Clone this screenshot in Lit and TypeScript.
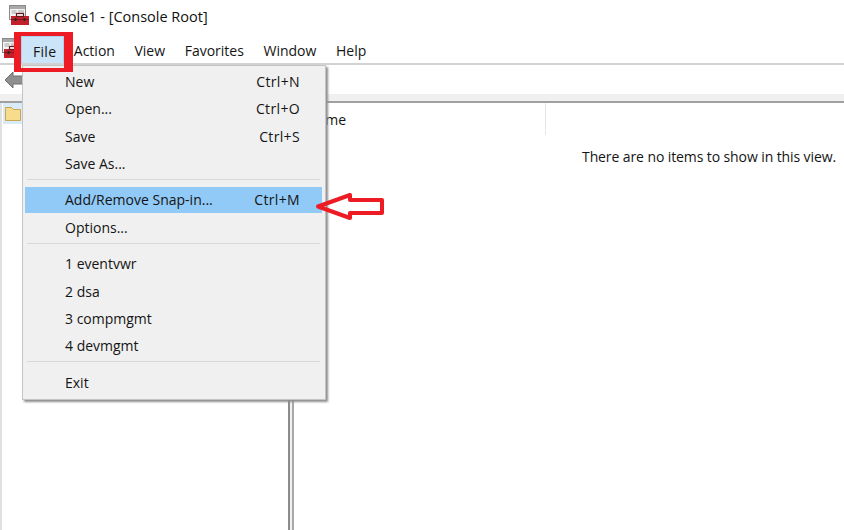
import { LitElement, html, css } from "lit";
import { customElement } from "lit/decorators.js";

const toolbox = (s: number) => html`<svg class="tb" width=${s} height=${s} viewBox="0 0 20 20">
  <rect x="0.5" y="0.5" width="16" height="14" fill="#f4f4f4" stroke="#8a8a8a"/>
  <rect x="1" y="1" width="15" height="3" fill="#a9a9a9"/>
  <path d="M2.5 6h5M2.5 8h5M9 6h6M9 8h6" stroke="#a5a5a5"/>
  <rect x="2" y="11" width="18" height="9" fill="#c3202b"/>
  <rect x="2" y="14" width="18" height="1" fill="#8c1219"/>
  <rect x="7.5" y="8.5" width="7" height="3" fill="none" stroke="#6b1a1e" stroke-width="1.2"/>
  <rect x="5.5" y="13" width="2" height="3" fill="#2a2a2a"/>
  <rect x="14.5" y="13" width="2" height="3" fill="#2a2a2a"/>
</svg>`;

type Row = { t: string; k?: string; on?: boolean } | "sep";
const rows: Row[] = [
  { t: "New", k: "Ctrl+N" },
  { t: "Open...", k: "Ctrl+O" },
  { t: "Save", k: "Ctrl+S" },
  { t: "Save As..." },
  "sep",
  { t: "Add/Remove Snap-in...", k: "Ctrl+M", on: true },
  { t: "Options..." },
  "sep",
  { t: "1 eventvwr" },
  { t: "2 dsa" },
  { t: "3 compmgmt" },
  { t: "4 devmgmt" },
  "sep",
  { t: "Exit" },
];

@customElement("app-root")
export class AppRoot extends LitElement {
  static styles = css`
    :host { display: block; width: 844px; height: 530px; position: relative; overflow: hidden; background: #fff;
      font-family: "Open Sans", "Noto Sans", sans-serif; font-size: 14px; color: #141414; }
    .title { height: 33px; display: flex; align-items: center; gap: 5px; padding: 0 0 3px 9px; box-sizing: border-box; font-size: 14.5px; color: #111; }
    .title span { margin-top: 2px; }
    .menubar { height: 32px; display: flex; align-items: center; box-sizing: border-box; padding: 0 0 0 2px; border-bottom: 2px solid #d2d2d2; }
    .menubar .tb { flex: none; }
    .mi { padding: 0 9.8px; height: 30px; display: flex; align-items: center; margin-top: 3px; }
    .mi span { margin-top: 2px; }
    .mi.file { width: 43px; height: 27px; margin: 3px 0 0 -1px; padding: 0 0 0 11px; box-sizing: border-box; background: #cce4f7; border: 1px solid #a9d3f5; border-bottom: none; letter-spacing: 0.3px; }
    .toolbar { height: 29px; background: #fff; display: flex; align-items: center; padding-left: 4px; box-sizing: border-box; }
    .strip { height: 7px; background: #f0f0f0; border-bottom: 2px solid #a0a0a0; }
    .panes { height: 427px; display: flex; }
    .tree { width: 288px; box-sizing: border-box; border-left: 2px solid #e0e0e0; padding: 0 0 0 1px; }
    .node { width: 20px; height: 21px; background: #d9ebf9; display: flex; align-items: center; justify-content: center; }
    .split { width: 6px; box-sizing: border-box; border-left: 2px solid #8c8c8c; border-right: 2px solid #a8a8a8; background: #f0f0f0; }
    .list { flex: 1; }
    .head { height: 32px; display: flex; align-items: center; width: 252px; box-sizing: border-box; padding-left: 13px; border-right: 1px solid #e6e6e6; }
    .empty { text-align: right; padding: 12px 8px 0 0; letter-spacing: -0.1px; }
    .menu { position: absolute; left: 22px; top: 65px; width: 304px; height: 335px; box-sizing: border-box;
      background: #f0f0f0; border: 1px solid #c4c4c4; box-shadow: 2px 2px 2px #8f8f8f; padding: 2px 3px 0 2px; }
    .row { height: 27.3px; display: flex; align-items: center; justify-content: space-between; padding: 0 22px 0 40px; box-sizing: border-box; }
    .row.on { background: #91c9f7; height: 26px; margin-bottom: 1px; }
    .key { letter-spacing: 0.35px; }
    .sep { height: 1px; background: #d8d8d8; margin: 2px 2px 6.4px 2px; }
    .redbox { position: absolute; left: 14px; top: 32px; box-sizing: content-box; width: 43px; height: 32px;
      border-style: solid; border-color: #ed1c24; border-width: 4px 9px 4px 7px; }
    .arrow { position: absolute; left: 310px; top: 187px; }
  `;
  render() {
    return html`
      <div class="title">${toolbox(20)}<span>Console1 - [Console Root]</span></div>
      <div class="menubar">
        ${toolbox(20)}
        <div class="mi file"><span>File</span></div>
        <div class="mi"><span>Action</span></div><div class="mi"><span>View</span></div><div class="mi"><span>Favorites</span></div><div class="mi"><span>Window</span></div><div class="mi"><span>Help</span></div>
      </div>
      <div class="toolbar">
        <svg width="20" height="18" viewBox="0 0 20 18"><path d="M1 9 9 1v4h10v8H9v4z" fill="#8f8f8f" stroke="#6e6e6e"/></svg>
      </div>
      <div class="strip"></div>
      <div class="panes">
        <div class="tree">
          <div class="node"><svg width="16" height="15" viewBox="0 0 16 15"><path d="M.5 1.5h6l2 2h7v11H.5z" fill="#f6dc8c" stroke="#c9a74e"/></svg></div>
        </div>
        <div class="split"></div>
        <div class="list">
          <div class="head">Name</div>
          <div class="empty">There are no items to show in this view.</div>
        </div>
      </div>
      <div class="menu">
        ${rows.map((r) =>
          r === "sep"
            ? html`<div class="sep"></div>`
            : html`<div class="row ${r.on ? "on" : ""}"><span>${r.t}</span><span class="key">${r.k ?? ""}</span></div>`
        )}
      </div>
      <div class="redbox"></div>
      <svg class="arrow" width="78" height="36" viewBox="0 0 78 36">
        <path d="M8 19.5 40 8v5h32v13H40v5z" fill="none" stroke="#ed1c24" stroke-width="4" stroke-linejoin="round"/>
      </svg>
    `;
  }
}
